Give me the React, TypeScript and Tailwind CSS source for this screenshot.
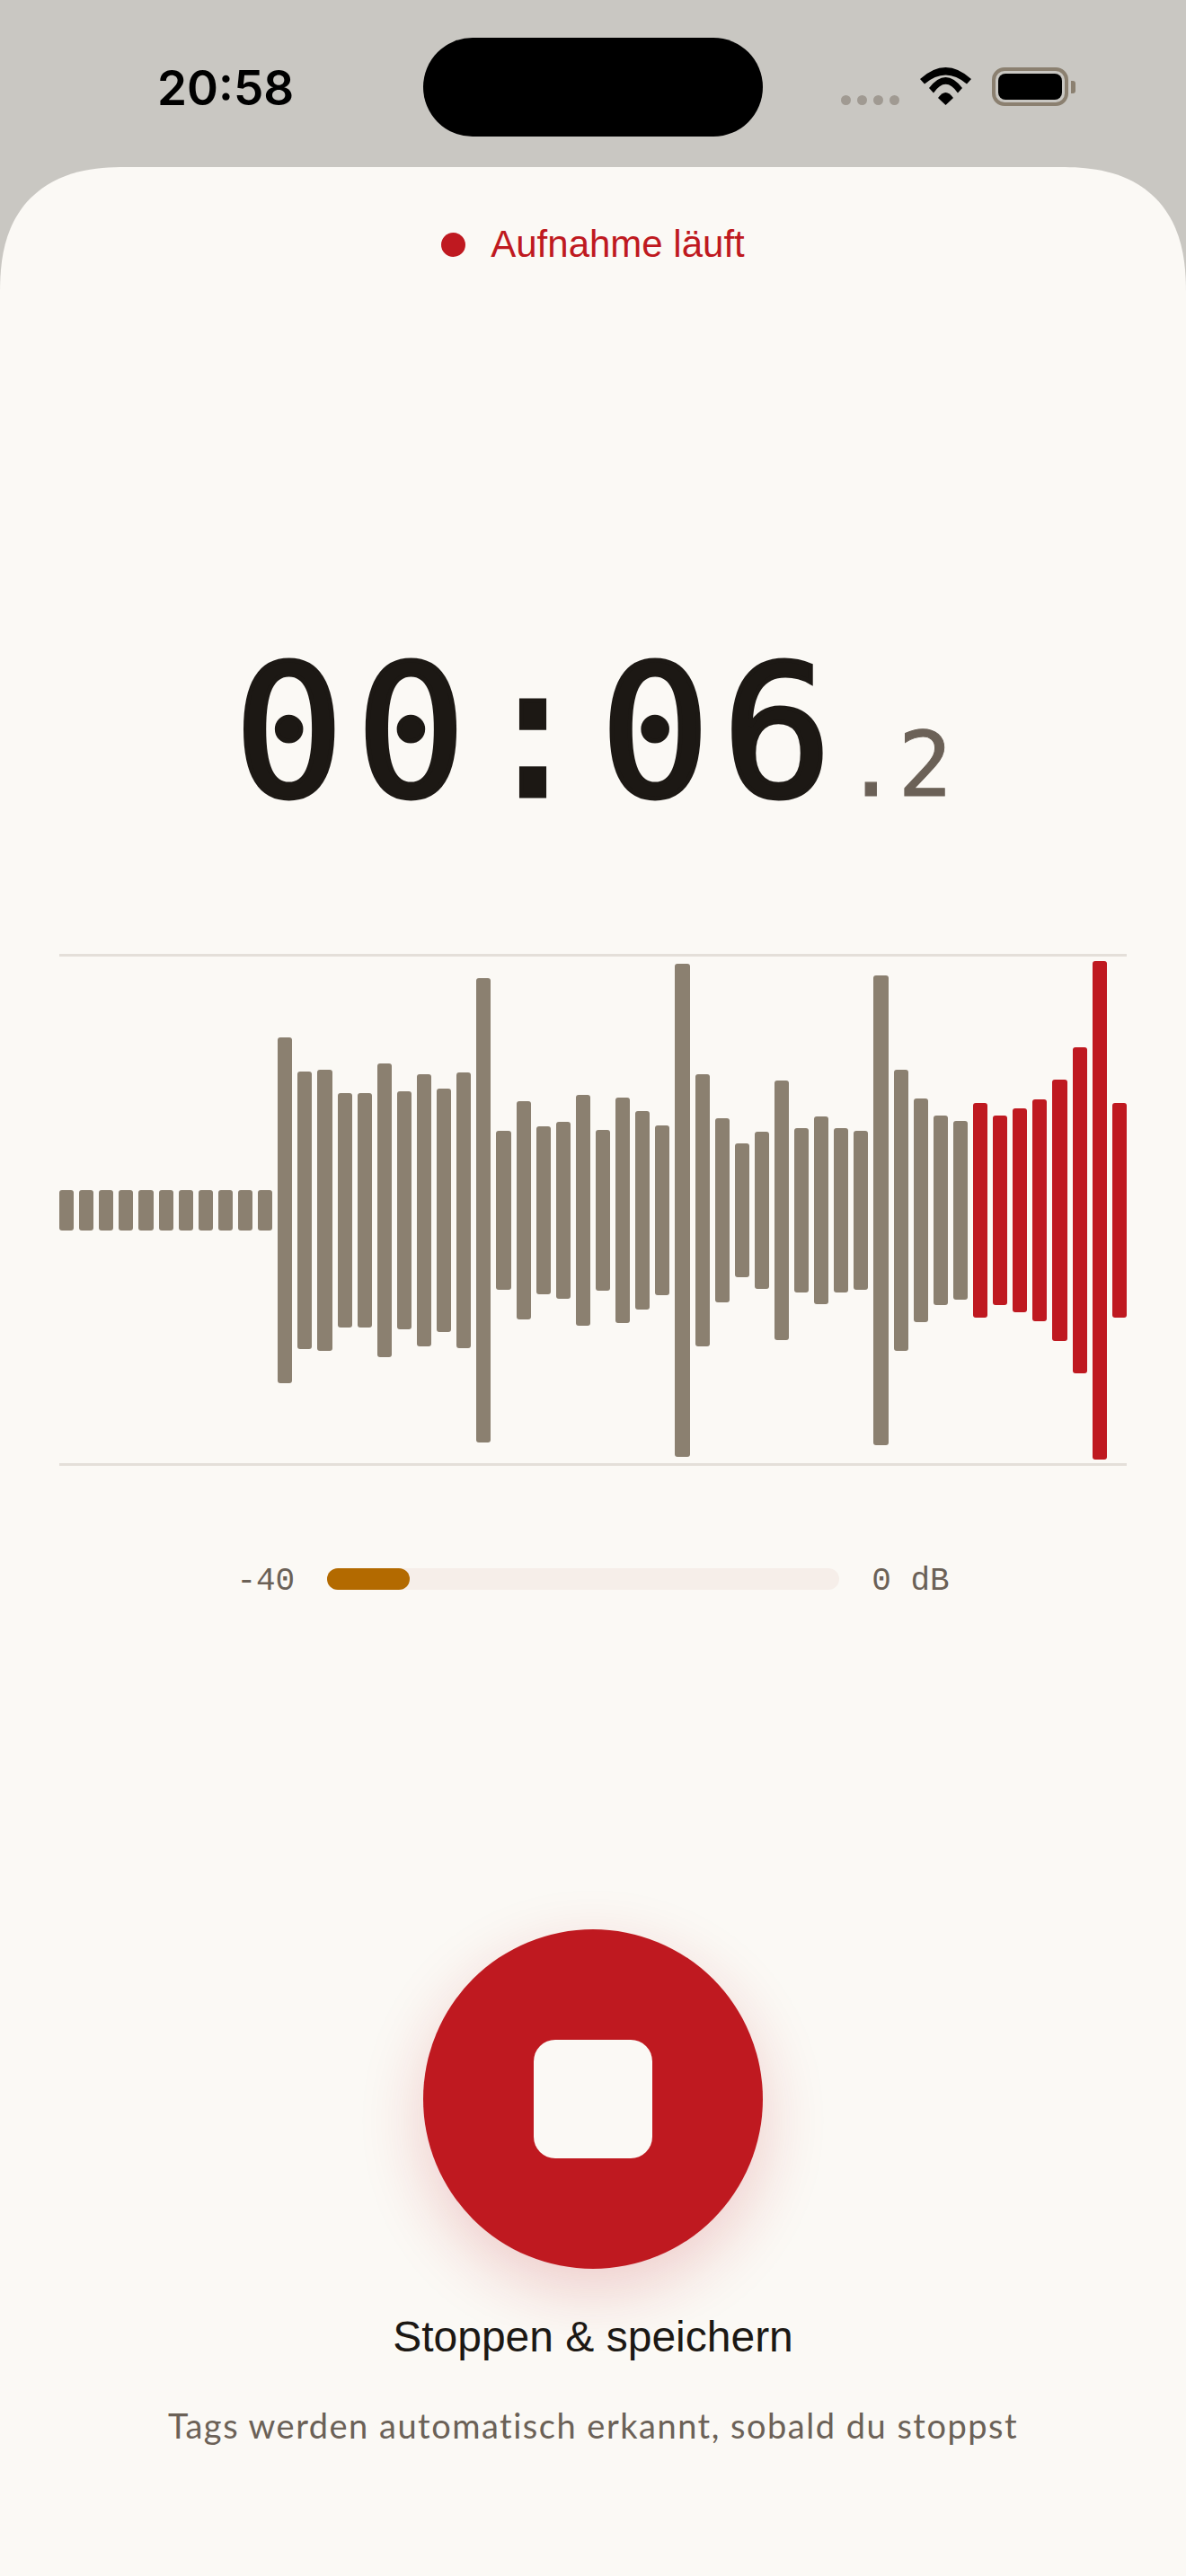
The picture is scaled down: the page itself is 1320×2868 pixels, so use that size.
import React from "react";

const bars = [
  45, 45, 45, 45, 45, 45, 45, 45, 45, 45, 45, 385, 309, 313, 261, 261, 327, 265, 303, 271, 307, 517, 177, 243, 187, 197,
  257, 179, 251, 221, 189, 549, 303, 205, 149, 175, 289, 183, 209, 183, 177, 523, 313, 249, 211, 199, 239, 211, 227, 247,
  291, 363, 555, 239,
];

const FIRST_RED = 46;

function Wifi() {
  return (
    <svg width="57" height="42" viewBox="0 0 57 42" fill="#000">
      <path d="M0 13Q28.5 -13 57 13L52 18.5Q28.5 -1.5 5 18.5Z" />
      <path d="M10 23Q28.5 -1 47 23L42 28.5Q28.5 9 15 28.5Z" />
      <path d="M20 34Q28.5 22 37 34L28.5 42Z" />
    </svg>
  );
}

function StatusBar() {
  return (
    <div className="h-[186px] grid grid-cols-[1fr_378px_1fr] pt-[42px]">
      <div className="pl-[175px] pt-[26px]">
        <span className="text-[53px] leading-[60px] font-semibold text-black font-['Inter',sans-serif]">20:58</span>
      </div>
      <div className="h-[110px] rounded-full bg-black" />
      <div className="flex items-start pl-[87px] pt-[33px]">
        <div className="flex gap-[7px] mt-[31px]">
          <div className="w-[11px] h-[11px] rounded-full bg-[#a09a92]" />
          <div className="w-[11px] h-[11px] rounded-full bg-[#a09a92]" />
          <div className="w-[11px] h-[11px] rounded-full bg-[#a09a92]" />
          <div className="w-[11px] h-[11px] rounded-full bg-[#a09a92]" />
        </div>
        <div className="ml-[23px]">
          <Wifi />
        </div>
        <div className="ml-[23px] flex items-center">
          <div className="w-[85px] h-[43px] rounded-[14px] border-[4px] border-[#8b8070] p-[3px]">
            <div className="w-full h-full rounded-[8px] bg-black" />
          </div>
          <div className="ml-[3px] w-[5px] h-[14px] rounded-r-[3px] bg-[#8b8070]" />
        </div>
      </div>
    </div>
  );
}

export default function App() {
  return (
    <div className="w-[1320px] h-[2868px] bg-[#c9c7c2] flex flex-col overflow-hidden font-['Liberation_Sans',sans-serif]">
      <StatusBar />
      <div className="flex-1 bg-[#fbf9f5] rounded-t-[140px] [corner-shape:superellipse(1.3)] flex flex-col items-center">
        <div className="mt-[62px] flex items-center gap-[28px] h-[48px]">
          <div className="w-[27px] h-[27px] rounded-full bg-[#bf1920]" />
          <span className="text-[42px] leading-[48px] text-[#bf1920]">Aufnahme läuft</span>
        </div>

        <div className="mt-[402px] flex items-baseline h-[236px] font-['DejaVu_Sans_Mono',monospace] text-[#1c1814]">
          <span className="text-[204px] leading-[236px] tracking-[13px] [-webkit-text-stroke:5px_#1c1814]">00:06</span>
          <span className="text-[100px] leading-[236px] text-[#6b6157] [-webkit-text-stroke:1px_#6b6157]">.2</span>
        </div>

        <div className="mt-[128px] w-[1188px] h-[570px] border-y-[3px] border-[#e4dfd9] flex items-center gap-[6px]">
          {bars.map((h, i) => (
            <div
              key={i}
              className={i >= FIRST_RED ? "flex-1 rounded-[3px] bg-[#bf1920]" : "flex-1 rounded-[3px] bg-[#8b8070]"}
              style={{ height: h }}
            />
          ))}
        </div>

        <div className="mt-[108px] flex items-center gap-[36px] h-[42px] font-['Liberation_Mono',monospace] text-[36px] text-[#6b6157]">
          <span>-40</span>
          <div className="w-[570px] h-[24px] mb-[6px] rounded-full bg-[#f6eee9]">
            <div className="w-[92px] h-full rounded-full bg-[#b36a00]" />
          </div>
          <span>0 dB</span>
        </div>

        <button className="mt-[366px] w-[378px] h-[378px] rounded-full bg-[#bf1920] shadow-[0_24px_72px_rgba(191,25,32,0.2)] flex items-center justify-center">
          <div className="w-[132px] h-[132px] rounded-[24px] bg-[#fbf9f5]" />
        </button>

        <div className="mt-[48px] text-[48px] leading-[56px] text-[#1c1814]">Stoppen &amp; speichern</div>
        <div className="mt-[48px] text-[38px] leading-[44px] text-[#6b6157] font-['Lato',sans-serif] tracking-[1.5px]">
          Tags werden automatisch erkannt, sobald du stoppst
        </div>
      </div>
    </div>
  );
}
